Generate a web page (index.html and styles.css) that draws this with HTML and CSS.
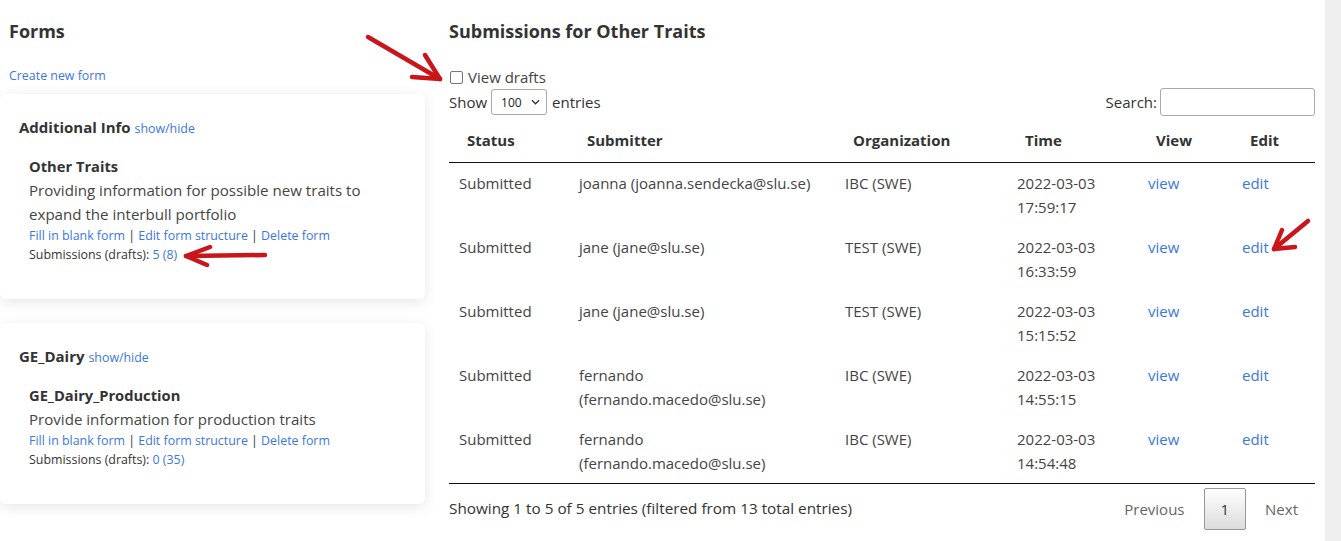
FILE: index.html
```html
<!DOCTYPE html>
<html lang="en">
<head>
<meta charset="utf-8">
<title>Forms</title>
<link rel="stylesheet" href="styles.css">
</head>
<body>
<div class="page">
  <div class="main">
    <aside class="forms-col">
      <h3 class="col-title">Forms</h3>
      <a class="small-link create" href="#">Create new form</a>

      <section class="card">
        <div class="group-title">Additional Info <a class="small-link" href="#">show/hide</a></div>
        <div class="form-item">
          <div class="form-name">Other Traits</div>
          <div class="form-desc">Providing information for possible new traits to expand the interbull portfolio</div>
          <div class="form-links"><a href="#">Fill in blank form</a> | <a href="#">Edit form structure</a> | <a href="#">Delete form</a></div>
          <div class="form-subs">Submissions (drafts): <a href="#">5</a> <a href="#">(8)</a></div>
        </div>
      </section>

      <section class="card">
        <div class="group-title">GE_Dairy <a class="small-link" href="#">show/hide</a></div>
        <div class="form-item">
          <div class="form-name">GE_Dairy_Production</div>
          <div class="form-desc">Provide information for production traits</div>
          <div class="form-links"><a href="#">Fill in blank form</a> | <a href="#">Edit form structure</a> | <a href="#">Delete form</a></div>
          <div class="form-subs">Submissions (drafts): <a href="#">0</a> <a href="#">(35)</a></div>
        </div>
      </section>
    </aside>

    <main class="subs-col">
      <h3 class="col-title">Submissions for Other Traits</h3>
      <label class="drafts"><span class="checkbox"></span>View drafts</label>
      <div class="dt-top">
        <div class="dt-length">Show <span class="select">100<svg class="chev" viewBox="0 0 10 6" width="9" height="6"><path d="M1 1l4 4 4-4" fill="none" stroke="#333" stroke-width="1.4"/></svg></span> entries</div>
        <div class="dt-search">Search:<span class="search-input"></span></div>
      </div>
      <table class="dt">
        <colgroup>
          <col class="c-status"><col class="c-submitter"><col class="c-org"><col class="c-time"><col class="c-view"><col class="c-edit">
        </colgroup>
        <thead>
          <tr><th>Status</th><th>Submitter</th><th>Organization</th><th>Time</th><th>View</th><th>Edit</th></tr>
        </thead>
        <tbody>
          <tr><td>Submitted</td><td>joanna (joanna.sendecka@slu.se)</td><td>IBC (SWE)</td><td>2022-03-03 17:59:17</td><td><a href="#">view</a></td><td><a href="#">edit</a></td></tr>
          <tr><td>Submitted</td><td>jane (jane@slu.se)</td><td>TEST (SWE)</td><td>2022-03-03 16:33:59</td><td><a href="#">view</a></td><td><a href="#">edit</a></td></tr>
          <tr><td>Submitted</td><td>jane (jane@slu.se)</td><td>TEST (SWE)</td><td>2022-03-03 15:15:52</td><td><a href="#">view</a></td><td><a href="#">edit</a></td></tr>
          <tr><td>Submitted</td><td>fernando (fernando.macedo@slu.se)</td><td>IBC (SWE)</td><td>2022-03-03 14:55:15</td><td><a href="#">view</a></td><td><a href="#">edit</a></td></tr>
          <tr><td>Submitted</td><td>fernando (fernando.macedo@slu.se)</td><td>IBC (SWE)</td><td>2022-03-03 14:54:48</td><td><a href="#">view</a></td><td><a href="#">edit</a></td></tr>
        </tbody>
      </table>
      <div class="dt-bottom">
        <div class="dt-info">Showing 1 to 5 of 5 entries (filtered from 13 total entries)</div>
        <div class="dt-paging">
          <span class="pg-btn disabled">Previous</span>
          <span class="pg-btn current">1</span>
          <span class="pg-btn disabled">Next</span>
        </div>
      </div>
    </main>
  </div>
  <div class="scroll-track"></div>

  <svg class="annot" width="1341" height="541" viewBox="0 0 1341 541">
    <g fill="none" stroke="#c8161b" stroke-width="4.5" stroke-linecap="round" stroke-linejoin="round">
      <path d="M368 37 L440 79"/>
      <path d="M425 55 L440 79 L412 77"/>
      <path d="M265 255 L186 256"/>
      <path d="M210 247 L186 256 L207 265"/>
      <path d="M1308 221 L1274 249"/>
      <path d="M1282 230 L1274 249 L1295 247"/>
    </g>
  </svg>
</div>
</body>
</html>
```

FILE: styles.css
```css
* { box-sizing: border-box; }
html, body { margin: 0; padding: 0; }
body {
  font-family: "Open Sans", "Noto Sans", sans-serif;
  color: #444;
  background: #fff;
  font-size: 16px;
}
a { color: #3b76e1; text-decoration: none; }

.page {
  position: relative;
  width: 1341px;
  height: 541px;
  overflow: hidden;
  display: flex;
}
.main {
  width: 1325px;
  display: flex;
  gap: 24px;
  padding-right: 10px;
}
.scroll-track {
  width: 16px;
  background: #efefef;
}

.col-title {
  margin: 19px 0 0;
  font-size: 18px;
  line-height: 24px;
  font-weight: 700;
  color: #333;
}

/* Left column */
.forms-col {
  width: 425px;
  flex: none;
}
.forms-col .col-title { margin-left: 9px; }
.small-link { font-size: 12.4px; }
.create {
  display: block;
  margin: 24px 0 0 9px;
  line-height: 18px;
}
.card {
  background: #fff;
  border-radius: 6px;
  box-shadow: 0 3px 14px rgba(0,0,0,0.10);
  padding: 23px 19px 35px;
  margin-top: 9px;
}
.card + .card { margin-top: 24px; }
.group-title {
  font-size: 15px;
  font-weight: 700;
  color: #333;
  line-height: 20px;
}
.group-title .small-link { font-weight: 400; }
.form-item {
  padding-left: 10px;
  margin-top: 15px;
}
.form-name {
  font-size: 14.7px;
  font-weight: 700;
  color: #333;
  line-height: 24px;
}
.form-desc {
  font-size: 15.1px;
  line-height: 24px;
  color: #444;
}
.form-links, .form-subs {
  font-size: 12.4px;
  line-height: 19px;
  color: #333;
}

/* Right column */
.subs-col {
  flex: 1;
  min-width: 0;
}
.drafts {
  display: flex;
  align-items: center;
  margin-top: 24px;
  height: 20px;
  font-size: 15px;
  color: #444;
}
.checkbox {
  width: 13px;
  height: 13px;
  border: 1px solid #767676;
  border-radius: 2px;
  margin: 0 5px 0 1px;
  background: #fff;
}
.dt-top {
  display: flex;
  justify-content: space-between;
  align-items: center;
  height: 30px;
  font-size: 15px;
  color: #333;
}
.dt-length { display: flex; align-items: center; }
.select {
  display: inline-flex;
  align-items: center;
  justify-content: space-between;
  width: 56px;
  height: 26px;
  margin: 0 5px 0 4px;
  padding: 0 6px 0 9px;
  border: 1px solid #a8a8a8;
  border-radius: 3px;
  font-size: 12px;
  color: #222;
}
.dt-search { display: flex; align-items: center; }
.search-input {
  display: inline-block;
  width: 155px;
  height: 28px;
  margin-left: 3px;
  border: 1px solid #aaa;
  border-radius: 3px;
}

table.dt {
  width: 866px;
  margin-top: 1px;
  table-layout: fixed;
  border-collapse: collapse;
  border-bottom: 1px solid #111;
}
.c-status { width: 120px; }
.c-submitter { width: 266px; }
.c-org { width: 172px; }
.c-time { width: 131px; }
.c-view { width: 94px; }
.c-edit { width: 83px; }
.dt th {
  text-align: left;
  font-weight: 700;
  font-size: 15px;
  color: #333;
  padding: 10px 18px;
  line-height: 24px;
  border-bottom: 1px solid #111;
}
.dt td {
  padding: 8px 10px;
  line-height: 24px;
  font-size: 15px;
  height: 64px;
  vertical-align: top;
  color: #444;
}

.dt-bottom {
  display: flex;
  justify-content: space-between;
  align-items: flex-start;
}
.dt-info {
  padding-top: 12px;
  line-height: 24px;
  font-size: 15.3px;
  color: #333;
}
.dt-paging {
  display: flex;
  padding-top: 4px;
}
.pg-btn {
  display: inline-block;
  padding: 8px 16px;
  margin-left: 2px;
  line-height: 24px;
  font-size: 15px;
  border: 1px solid transparent;
  border-radius: 2px;
  color: #333;
}
.pg-btn.disabled { color: #666; }
.pg-btn.current {
  border-color: #979797;
  background: linear-gradient(to bottom, #fff 0%, #dcdcdc 100%);
  color: #333;
}

.annot {
  position: absolute;
  left: 0;
  top: 0;
  pointer-events: none;
}
```
